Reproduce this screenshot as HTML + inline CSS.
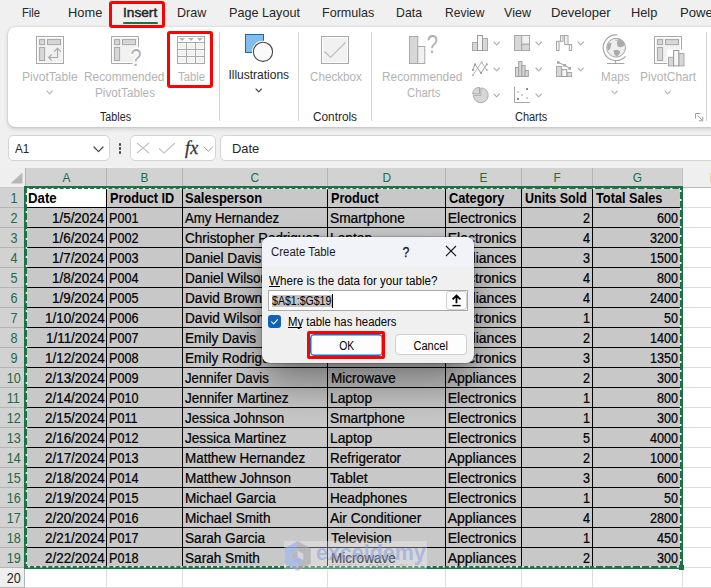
<!DOCTYPE html>
<html lang="en"><head><meta charset="utf-8"><title>Create Table</title>
<style>
*{box-sizing:border-box;margin:0;padding:0}
html,body{width:711px;height:588px;overflow:hidden;background:#f0f0f0}
#root{position:relative;width:711px;height:588px;overflow:hidden;background:#f0f0f0;font-family:"Liberation Sans",sans-serif}
</style></head><body><div id="root">
<!-- tabs -->
<span style="position:absolute;top:4.00px;font-size:13px;line-height:17px;color:#262626;white-space:nowrap;left:22.40px;transform-origin:0 50%;transform:scaleX(0.864);">File</span>
<span style="position:absolute;top:4.00px;font-size:13px;line-height:17px;color:#262626;white-space:nowrap;left:68.40px;transform-origin:0 50%;transform:scaleX(0.989);">Home</span>
<span style="position:absolute;top:4.00px;font-size:13px;line-height:17px;color:#262626;white-space:nowrap;left:177.10px;transform-origin:0 50%;transform:scaleX(0.963);">Draw</span>
<span style="position:absolute;top:4.00px;font-size:13px;line-height:17px;color:#262626;white-space:nowrap;left:229.20px;transform-origin:0 50%;transform:scaleX(0.973);">Page Layout</span>
<span style="position:absolute;top:4.00px;font-size:13px;line-height:17px;color:#262626;white-space:nowrap;left:322.30px;transform-origin:0 50%;transform:scaleX(0.967);">Formulas</span>
<span style="position:absolute;top:4.00px;font-size:13px;line-height:17px;color:#262626;white-space:nowrap;left:396.40px;transform-origin:0 50%;transform:scaleX(0.947);">Data</span>
<span style="position:absolute;top:4.00px;font-size:13px;line-height:17px;color:#262626;white-space:nowrap;left:444.50px;transform-origin:0 50%;transform:scaleX(0.927);">Review</span>
<span style="position:absolute;top:4.00px;font-size:13px;line-height:17px;color:#262626;white-space:nowrap;left:503.80px;transform-origin:0 50%;transform:scaleX(0.966);">View</span>
<span style="position:absolute;top:4.00px;font-size:13px;line-height:17px;color:#262626;white-space:nowrap;left:551.00px;transform-origin:0 50%;transform:scaleX(1.007);">Developer</span>
<span style="position:absolute;top:4.00px;font-size:13px;line-height:17px;color:#262626;white-space:nowrap;left:630.60px;transform-origin:0 50%;transform:scaleX(0.984);">Help</span>
<span style="position:absolute;top:4.00px;font-size:13px;line-height:17px;color:#262626;white-space:nowrap;left:680.20px;transform-origin:0 50%;transform:scaleX(1.009);">Power Pivot</span>
<span style="position:absolute;top:4.00px;font-size:13px;line-height:17px;color:#262626;white-space:nowrap;left:122.90px;transform-origin:0 50%;transform:scaleX(1.052);-webkit-text-stroke:0.45px #262626;">Insert</span>
<div style="position:absolute;left:123.2px;top:21.5px;width:35px;height:2px;background:#1e7145;border-radius:1px"></div>
<!-- ribbon -->
<div style="position:absolute;left:8px;top:27px;width:720px;height:99.7px;background:#fff;border-radius:7px;box-shadow:0 2px 4px rgba(0,0,0,.15),0 0 1.5px rgba(0,0,0,.25)"></div>
<div style="position:absolute;left:219.0px;top:32px;width:1px;height:88.5px;background:#d4d4d4"></div>
<div style="position:absolute;left:298.0px;top:32px;width:1px;height:88.5px;background:#d4d4d4"></div>
<div style="position:absolute;left:371.0px;top:32px;width:1px;height:88.5px;background:#d4d4d4"></div>
<div style="position:absolute;left:706.0px;top:32px;width:1px;height:88.5px;background:#d4d4d4"></div>
<span style="position:absolute;top:69.00px;font-size:12px;line-height:16px;color:#b3b3b3;white-space:nowrap;left:21.80px;transform-origin:0 50%;transform:scaleX(1.004);">PivotTable</span>
<svg style="position:absolute;left:45.60px;top:90.10px" width="7.4" height="4.8" viewBox="-1 -1 7.4 4.8"><path d="M0 0 L2.7 2.8 L5.4 0" fill="none" stroke="#b8b8b8" stroke-width="1.1" stroke-linecap="round" stroke-linejoin="round"/></svg>
<span style="position:absolute;top:69.00px;font-size:12px;line-height:16px;color:#b3b3b3;white-space:nowrap;left:84.30px;transform-origin:0 50%;transform:scaleX(0.987);">Recommended</span>
<span style="position:absolute;top:85.00px;font-size:12px;line-height:16px;color:#b3b3b3;white-space:nowrap;left:94.60px;transform-origin:0 50%;transform:scaleX(0.978);">PivotTables</span>
<span style="position:absolute;top:69.00px;font-size:12px;line-height:16px;color:#b3b3b3;white-space:nowrap;left:177.90px;transform-origin:0 50%;transform:scaleX(0.945);">Table</span>
<span style="position:absolute;top:67.00px;font-size:12px;line-height:16px;color:#262626;white-space:nowrap;left:228.40px;transform-origin:0 50%;">Illustrations</span>
<svg style="position:absolute;left:254.80px;top:87.80px" width="7.4" height="4.8" viewBox="-1 -1 7.4 4.8"><path d="M0 0 L2.7 2.8 L5.4 0" fill="none" stroke="#444" stroke-width="1.1" stroke-linecap="round" stroke-linejoin="round"/></svg>
<span style="position:absolute;top:69.00px;font-size:12px;line-height:16px;color:#b3b3b3;white-space:nowrap;left:309.60px;transform-origin:0 50%;transform:scaleX(0.971);">Checkbox</span>
<span style="position:absolute;top:69.00px;font-size:12px;line-height:16px;color:#b3b3b3;white-space:nowrap;left:382.40px;transform-origin:0 50%;transform:scaleX(0.987);">Recommended</span>
<span style="position:absolute;top:85.00px;font-size:12px;line-height:16px;color:#b3b3b3;white-space:nowrap;left:406.60px;transform-origin:0 50%;transform:scaleX(0.945);">Charts</span>
<span style="position:absolute;top:69.00px;font-size:12px;line-height:16px;color:#b3b3b3;white-space:nowrap;left:600.60px;transform-origin:0 50%;transform:scaleX(0.971);">Maps</span>
<svg style="position:absolute;left:610.90px;top:90.10px" width="7.4" height="4.8" viewBox="-1 -1 7.4 4.8"><path d="M0 0 L2.7 2.8 L5.4 0" fill="none" stroke="#b8b8b8" stroke-width="1.1" stroke-linecap="round" stroke-linejoin="round"/></svg>
<span style="position:absolute;top:69.00px;font-size:12px;line-height:16px;color:#b3b3b3;white-space:nowrap;left:640.10px;transform-origin:0 50%;">PivotChart</span>
<svg style="position:absolute;left:663.70px;top:90.10px" width="7.4" height="4.8" viewBox="-1 -1 7.4 4.8"><path d="M0 0 L2.7 2.8 L5.4 0" fill="none" stroke="#b8b8b8" stroke-width="1.1" stroke-linecap="round" stroke-linejoin="round"/></svg>
<span style="position:absolute;top:109.00px;font-size:12px;line-height:16px;color:#262626;white-space:nowrap;left:99.60px;transform-origin:0 50%;transform:scaleX(0.894);">Tables</span>
<span style="position:absolute;top:109.00px;font-size:12px;line-height:16px;color:#262626;white-space:nowrap;left:313.00px;transform-origin:0 50%;transform:scaleX(0.985);">Controls</span>
<span style="position:absolute;top:109.00px;font-size:12px;line-height:16px;color:#262626;white-space:nowrap;left:515.30px;transform-origin:0 50%;transform:scaleX(0.914);">Charts</span>
<svg style="position:absolute;left:36px;top:36px;overflow:visible" width="28" height="28" viewBox="0 0 28 28"><rect x="0.5" y="0.5" width="27" height="27" fill="#f1f1f1" stroke="#a8a8a8" stroke-width="1"/><rect x="1.5" y="1.5" width="25" height="25" fill="none" stroke="#fff" stroke-width="1"/><rect x="3.6" y="3.6" width="5" height="5" fill="#d7d7d7" stroke="#a8a8a8" stroke-width="1"/><rect x="11.5" y="3.6" width="13" height="5" fill="#d7d7d7" stroke="#a8a8a8" stroke-width="1"/><rect x="3.6" y="11.5" width="5" height="13" fill="#d7d7d7" stroke="#a8a8a8" stroke-width="1"/><path d="M21.5 12.3 V21.5 H12.6 M18.3 15.5 L21.5 12.3 L24.7 15.5 M15.8 18.3 L12.6 21.5 L15.8 24.7" fill="none" stroke="#a8a8a8" stroke-width="1.1"/></svg>
<svg style="position:absolute;left:111px;top:36px;overflow:visible" width="30" height="30" viewBox="0 0 30 30"><path d="M27.5 11.5 V0.5 H0.5 V27.5 H21.5" fill="#f1f1f1" stroke="none"/><rect x="0.5" y="0.5" width="27" height="27" fill="#f1f1f1" stroke="none"/><rect x="1.5" y="1.5" width="25" height="25" fill="none" stroke="#fff" stroke-width="1"/><path d="M27.5 11.5 V0.5 H0.5 V27.5 H21.5" fill="none" stroke="#a8a8a8" stroke-width="1"/><rect x="3.6" y="3.6" width="5" height="5" fill="#d7d7d7" stroke="#a8a8a8" stroke-width="1"/><rect x="11.5" y="3.6" width="13" height="5" fill="#d7d7d7" stroke="#a8a8a8" stroke-width="1"/><rect x="3.6" y="11.5" width="5" height="13" fill="#d7d7d7" stroke="#a8a8a8" stroke-width="1"/><text transform="translate(25 29.5) scale(0.8 1)" text-anchor="middle" font-family="Liberation Sans, sans-serif" font-size="24.5" fill="#b0b0b0" stroke="#fff" stroke-width="3.4" stroke-linejoin="round" paint-order="stroke">?</text></svg>
<svg style="position:absolute;left:177px;top:36px;overflow:visible" width="28" height="28" viewBox="0 0 28 28"><rect x="0.5" y="0.5" width="27" height="27" fill="#fff" stroke="#a8a8a8" stroke-width="1"/><rect x="1" y="6.5" width="26" height="20.5" fill="#f1f1f1"/><path d="M0.5 6.5 H27.5 M0.5 13.5 H27.5 M0.5 20.5 H27.5 M9.5 6.5 V27.5 M18.5 6.5 V27.5" stroke="#a8a8a8" stroke-width="1" fill="none"/><path d="M1.5 7.5 H8.5 V12.5 H1.5 Z M10.5 7.5 H17.5 V12.5 H10.5 Z M19.5 7.5 H26.5 V12.5 H19.5 Z M1.5 14.5 H8.5 V19.5 H1.5 Z M10.5 14.5 H17.5 V19.5 H10.5 Z M19.5 14.5 H26.5 V19.5 H19.5 Z M1.5 21.5 H8.5 V26.5 H1.5 Z M10.5 21.5 H17.5 V26.5 H10.5 Z M19.5 21.5 H26.5 V26.5 H19.5 Z" fill="none" stroke="#fff" stroke-width="0.6"/><path d="M2.2 2 H8.2 L5.2 5 Z" fill="#b2b2b2"/><path d="M11 2 H17 L14 5 Z" fill="#b2b2b2"/><path d="M19.8 2 H25.8 L22.8 5 Z" fill="#b2b2b2"/></svg>
<svg style="position:absolute;left:244px;top:33px;overflow:visible" width="32" height="32" viewBox="0 0 32 32"><rect x="1.5" y="1.5" width="18" height="18" fill="#83bdec" stroke="#0f6cbd" stroke-width="1"/><circle cx="19" cy="18.8" r="11" fill="#fff"/><circle cx="19" cy="18.8" r="9.6" fill="#fafafa" stroke="#474747" stroke-width="1.1"/></svg>
<svg style="position:absolute;left:321px;top:36px;overflow:visible" width="28" height="28" viewBox="0 0 28 28"><rect x="0.5" y="0.5" width="27" height="27" fill="#f1f1f1" stroke="#a8a8a8" stroke-width="1"/><rect x="1.5" y="1.5" width="25" height="25" fill="none" stroke="#fff" stroke-width="0.8"/><path d="M3.5 15.5 L9.5 21.3 L24.5 6.3" fill="none" stroke="#b4b4b4" stroke-width="1.1"/></svg>
<svg style="position:absolute;left:409px;top:36px;overflow:visible" width="30" height="28" viewBox="0 0 30 28"><rect x="0.5" y="0.5" width="8.3" height="27" fill="#d7d7d7" stroke="#a8a8a8" stroke-width="1"/><rect x="8.8" y="10.5" width="7" height="17" fill="#f1f1f1" stroke="#a8a8a8" stroke-width="1"/><text transform="translate(23.2 16.6) scale(0.8 1)" text-anchor="middle" font-family="Liberation Sans, sans-serif" font-size="25" fill="#b0b0b0">?</text></svg>
<svg style="position:absolute;left:472px;top:35px;overflow:visible" width="16" height="16" viewBox="0 0 16 16"><rect x="0.5" y="7.5" width="5" height="8" fill="#d7d7d7" stroke="#a8a8a8" stroke-width="1"/><rect x="10.5" y="3.5" width="5" height="12" fill="#d7d7d7" stroke="#a8a8a8" stroke-width="1"/><rect x="5.5" y="0.5" width="5" height="15" fill="#f6f6f6" stroke="#9a9a9a" stroke-width="1"/></svg>
<svg style="position:absolute;left:472px;top:61px;overflow:visible" width="16" height="16" viewBox="0 0 16 16"><path d="M0.8 9 L2.9 3.3 L9 12 L14.8 3.3" fill="none" stroke="#9c9c9c" stroke-width="1"/><path d="M0.8 14.2 L9.6 1.3 L14.8 9" fill="none" stroke="#b6b6b6" stroke-width="1"/><rect x="0.0" y="8.1" width="1.8" height="1.8" fill="#999"/><rect x="2.0" y="2.4" width="1.8" height="1.8" fill="#999"/><rect x="8.1" y="11.1" width="1.8" height="1.8" fill="#999"/><rect x="13.9" y="2.4" width="1.8" height="1.8" fill="#999"/><rect x="0.0" y="13.299999999999999" width="1.8" height="1.8" fill="#b6b6b6"/><rect x="8.7" y="0.4" width="1.8" height="1.8" fill="#b6b6b6"/><rect x="13.9" y="8.1" width="1.8" height="1.8" fill="#b6b6b6"/></svg>
<svg style="position:absolute;left:472px;top:87px;overflow:visible" width="16" height="16" viewBox="0 0 16 16"><path d="M8.8 8.3 V0.9 A7.4 7.4 0 1 1 1.4 8.3 Z" fill="#d7d7d7" stroke="#a8a8a8" stroke-width="1"/><path d="M7.5 7 H0.6 A6.9 6.9 0 0 1 7.5 0.4 Z" fill="#d7d7d7" stroke="#a8a8a8" stroke-width="1"/></svg>
<svg style="position:absolute;left:514px;top:35px;overflow:visible" width="16" height="16" viewBox="0 0 16 16"><rect x="0.5" y="0.5" width="7.2" height="15" fill="#d7d7d7" stroke="#a8a8a8" stroke-width="1"/><rect x="7.7" y="0.5" width="7.8" height="8.7" fill="#f1f1f1" stroke="#a8a8a8" stroke-width="1"/><rect x="7.7" y="9.2" width="7.8" height="6.3" fill="#d7d7d7" stroke="#a8a8a8" stroke-width="1"/></svg>
<svg style="position:absolute;left:515px;top:61px;overflow:visible" width="14" height="16" viewBox="0 0 14 16"><rect x="0.5" y="6.5" width="3.2" height="9" fill="#d7d7d7" stroke="#a0a0a0" stroke-width="1"/><rect x="3.7" y="0.6" width="3.2" height="14.9" fill="#d7d7d7" stroke="#a0a0a0" stroke-width="1"/><rect x="6.9" y="4.5" width="3.2" height="11" fill="#d7d7d7" stroke="#a0a0a0" stroke-width="1"/><rect x="10.1" y="9.5" width="3.2" height="6" fill="#d7d7d7" stroke="#a0a0a0" stroke-width="1"/></svg>
<svg style="position:absolute;left:514px;top:87px;overflow:visible" width="16" height="16" viewBox="0 0 16 16"><path d="M0.5 0 V15.5 H16" fill="none" stroke="#a8a8a8" stroke-width="1"/><rect x="12" y="1" width="2" height="2" fill="#8e8e8e"/><rect x="3" y="11" width="2" height="2" fill="#8e8e8e"/><rect x="3" y="4" width="2" height="2" fill="#cfcfcf"/><rect x="7" y="7" width="2" height="2" fill="#cfcfcf"/><rect x="12" y="10" width="2" height="2" fill="#cfcfcf"/></svg>
<svg style="position:absolute;left:556px;top:35px;overflow:visible" width="16" height="16" viewBox="0 0 16 16"><rect x="0.5" y="6.3" width="2.6" height="9.2" fill="#f1f1f1" stroke="#a8a8a8" stroke-width="1"/><rect x="4.5" y="0.5" width="2.6" height="5.8" fill="#f1f1f1" stroke="#a8a8a8" stroke-width="1"/><rect x="8.6" y="0.5" width="3.4" height="9" fill="#f1f1f1" stroke="#a8a8a8" stroke-width="1"/><rect x="13.3" y="9.5" width="2.4" height="6" fill="#f1f1f1" stroke="#a8a8a8" stroke-width="1"/><path d="M3.1 6.3 H4.5 M7.1 0.5 H8.6 M12 9.5 H13.3" stroke="#a8a8a8" stroke-width="1" fill="none"/></svg>
<svg style="position:absolute;left:556px;top:61px;overflow:visible" width="16" height="16" viewBox="0 0 16 16"><rect x="0.5" y="5.5" width="5.2" height="10" fill="#d7d7d7" stroke="#a8a8a8" stroke-width="1"/><rect x="10.8" y="11.5" width="4.8" height="4" fill="#d7d7d7" stroke="#a8a8a8" stroke-width="1"/><rect x="5.7" y="8.7" width="5.1" height="6.8" fill="#f6f6f6" stroke="#9a9a9a" stroke-width="1"/><path d="M2.3 1.4 L8.6 4.3 L13.6 7.4" stroke="#a0a0a0" stroke-width="1" fill="none"/><rect x="1" y="0.3" width="2.6" height="2.4" fill="#a0a0a0"/><rect x="7.4" y="3.2" width="2.6" height="2.4" fill="#a0a0a0"/><rect x="12.4" y="6.2" width="2.6" height="2.4" fill="#a0a0a0"/></svg>
<svg style="position:absolute;left:602px;top:34px;overflow:visible" width="26" height="31" viewBox="0 0 26 31"><circle cx="14.1" cy="13.7" r="9.4" fill="#efefef" stroke="#a4a4a4" stroke-width="1"/><path d="M16 5 C19 4.5 22.5 7 22.8 10.5 C21 13.5 17.5 14 15.5 12 C14.5 10 15 7 16 5 Z" fill="#ababab"/><path d="M5.5 10.5 C7 8.5 9 8.5 9.5 9.5 C9 12 8.5 14 7 16.5 C5.5 16 4.8 13 5.5 10.5 Z" fill="#ababab"/><path d="M11.5 16.5 C14 15.8 17 16 18 17.5 C18 20 16.5 22 14.5 22.5 C12.5 21 11.5 19 11.5 16.5 Z" fill="#ababab"/><path d="M13.5 5.5 C14.5 5.2 15.2 5.8 14.8 6.8 C14 7.3 13.2 6.8 13.5 5.5 Z" fill="#b8b8b8"/><path d="M15.5 1 A12.8 12.8 0 1 0 23.5 22.3" fill="none" stroke="#a4a4a4" stroke-width="1.1"/><path d="M13.6 26.3 V29.5 M5 29.5 H22.3" stroke="#a4a4a4" stroke-width="1.1" fill="none"/></svg>
<svg style="position:absolute;left:654px;top:36px;overflow:visible" width="31" height="31" viewBox="0 0 31 31"><rect x="0.5" y="0.5" width="27" height="27" fill="#f1f1f1" stroke="#a8a8a8" stroke-width="1"/><rect x="1.5" y="1.5" width="25" height="25" fill="none" stroke="#fff" stroke-width="1"/><rect x="3.6" y="3.6" width="5" height="5" fill="#d7d7d7" stroke="#a8a8a8" stroke-width="1"/><rect x="11.5" y="3.6" width="13" height="5" fill="#d7d7d7" stroke="#a8a8a8" stroke-width="1"/><rect x="3.6" y="11.5" width="5" height="13" fill="#d7d7d7" stroke="#a8a8a8" stroke-width="1"/><rect x="13.3" y="13.5" width="18" height="17" fill="#fff"/><rect x="14.5" y="21.3" width="5.1" height="8.6" fill="#d7d7d7" stroke="#a8a8a8" stroke-width="1"/><rect x="24.8" y="17.6" width="5.2" height="12.3" fill="#d7d7d7" stroke="#a8a8a8" stroke-width="1"/><rect x="19.6" y="14.5" width="5.2" height="15.4" fill="#f6f6f6" stroke="#9a9a9a" stroke-width="1"/></svg>
<svg style="position:absolute;left:695px;top:113px;overflow:visible" width="9" height="9" viewBox="0 0 9 9"><path d="M0.5 5.5 V0.5 H5.5 M2.6 2.6 L7.6 7.6 M7.8 3.8 V7.8 H3.8" fill="none" stroke="#a0a0a0" stroke-width="1"/></svg>
<svg style="position:absolute;left:492.80px;top:41.10px" width="7.4" height="4.8" viewBox="-1 -1 7.4 4.8"><path d="M0 0 L2.7 2.8 L5.4 0" fill="none" stroke="#b0b0b0" stroke-width="1.1" stroke-linecap="round" stroke-linejoin="round"/></svg>
<svg style="position:absolute;left:492.80px;top:67.30px" width="7.4" height="4.8" viewBox="-1 -1 7.4 4.8"><path d="M0 0 L2.7 2.8 L5.4 0" fill="none" stroke="#b0b0b0" stroke-width="1.1" stroke-linecap="round" stroke-linejoin="round"/></svg>
<svg style="position:absolute;left:492.80px;top:93.20px" width="7.4" height="4.8" viewBox="-1 -1 7.4 4.8"><path d="M0 0 L2.7 2.8 L5.4 0" fill="none" stroke="#b0b0b0" stroke-width="1.1" stroke-linecap="round" stroke-linejoin="round"/></svg>
<svg style="position:absolute;left:534.80px;top:41.10px" width="7.4" height="4.8" viewBox="-1 -1 7.4 4.8"><path d="M0 0 L2.7 2.8 L5.4 0" fill="none" stroke="#b0b0b0" stroke-width="1.1" stroke-linecap="round" stroke-linejoin="round"/></svg>
<svg style="position:absolute;left:534.80px;top:67.30px" width="7.4" height="4.8" viewBox="-1 -1 7.4 4.8"><path d="M0 0 L2.7 2.8 L5.4 0" fill="none" stroke="#b0b0b0" stroke-width="1.1" stroke-linecap="round" stroke-linejoin="round"/></svg>
<svg style="position:absolute;left:534.80px;top:93.20px" width="7.4" height="4.8" viewBox="-1 -1 7.4 4.8"><path d="M0 0 L2.7 2.8 L5.4 0" fill="none" stroke="#b0b0b0" stroke-width="1.1" stroke-linecap="round" stroke-linejoin="round"/></svg>
<svg style="position:absolute;left:576.60px;top:41.10px" width="7.4" height="4.8" viewBox="-1 -1 7.4 4.8"><path d="M0 0 L2.7 2.8 L5.4 0" fill="none" stroke="#b0b0b0" stroke-width="1.1" stroke-linecap="round" stroke-linejoin="round"/></svg>
<svg style="position:absolute;left:576.60px;top:67.30px" width="7.4" height="4.8" viewBox="-1 -1 7.4 4.8"><path d="M0 0 L2.7 2.8 L5.4 0" fill="none" stroke="#b0b0b0" stroke-width="1.1" stroke-linecap="round" stroke-linejoin="round"/></svg>
<div style="position:absolute;left:109px;top:1px;width:56px;height:27px;border:3px solid #ff0000;border-radius:3px"></div>
<div style="position:absolute;left:167px;top:31px;width:46px;height:57px;border:3px solid #ff0000;border-radius:3px"></div>
<!-- formula bar -->
<div style="position:absolute;left:8px;top:135px;width:102px;height:26px;background:#fff;border:1px solid #d4d4d4;border-radius:5px"></div>
<span style="position:absolute;top:139.50px;font-size:13.5px;line-height:18px;color:#262626;white-space:nowrap;left:15.00px;transform-origin:0 50%;transform:scaleX(0.866);">A1</span>
<svg style="position:absolute;left:93.10px;top:146.30px" width="11" height="6.6" viewBox="-1 -1 11 6.6"><path d="M0 0 L4.5 4.6 L9 0" fill="none" stroke="#444" stroke-width="1.2" stroke-linecap="round" stroke-linejoin="round"/></svg>
<div style="position:absolute;left:119px;top:143.3px;width:2.4px;height:2.4px;background:#444;border-radius:50%"></div>
<div style="position:absolute;left:119px;top:147.3px;width:2.4px;height:2.4px;background:#444;border-radius:50%"></div>
<div style="position:absolute;left:119px;top:151.3px;width:2.4px;height:2.4px;background:#444;border-radius:50%"></div>
<div style="position:absolute;left:130px;top:135px;width:86px;height:26px;background:#fff;border:1px solid #d4d4d4;border-radius:5px"></div>
<svg style="position:absolute;left:136px;top:142px" width="14" height="12" viewBox="0 0 14 12"><path d="M1 1 L13 11 M13 1 L1 11" stroke="#c4c4c4" stroke-width="1.2" fill="none"/></svg>
<svg style="position:absolute;left:158px;top:142px" width="18" height="12" viewBox="0 0 18 12"><path d="M1 6.5 L6 11 L17 1" stroke="#c4c4c4" stroke-width="1.2" fill="none"/></svg>
<span style="position:absolute;left:185px;top:137.5px;font-family:'Liberation Serif',serif;font-style:italic;font-size:18px;line-height:20px;color:#333;letter-spacing:0.2px;-webkit-text-stroke:0.3px #333">fx</span>
<svg style="position:absolute;left:203.40px;top:145.50px" width="10.6" height="6.2" viewBox="-1 -1 10.6 6.2"><path d="M0 0 L4.3 4.2 L8.6 0" fill="none" stroke="#9a9a9a" stroke-width="1" stroke-linecap="round" stroke-linejoin="round"/></svg>
<div style="position:absolute;left:220px;top:135px;width:520px;height:26px;background:#fff;border:1px solid #d4d4d4;border-radius:5px"></div>
<span style="position:absolute;top:139.50px;font-size:13.5px;line-height:18px;color:#262626;white-space:nowrap;left:231.60px;transform-origin:0 50%;transform:scaleX(0.957);">Date</span>
<!-- grid -->
<div style="position:absolute;left:0px;top:168px;width:711px;height:420px;background:#fff"></div>
<div style="position:absolute;left:0px;top:168px;width:25px;height:19px;background:#efefef"></div>
<svg style="position:absolute;left:10px;top:172px" width="13" height="12" viewBox="0 0 13 12"><path d="M12.5 0.5 L12.5 11.5 L0.5 11.5 Z" fill="#b7b7b7"/></svg>
<div style="position:absolute;left:25px;top:168px;width:657px;height:19px;background:#d2d2d2"></div>
<div style="position:absolute;left:106px;top:168px;width:1px;height:19px;background:#b4b4b4"></div>
<span style="position:absolute;top:168.50px;font-size:13.5px;line-height:18px;color:#1e6b45;white-space:nowrap;left:61.50px;transform-origin:50% 50%;transform:scaleX(0.880);">A</span>
<div style="position:absolute;left:182px;top:168px;width:1px;height:19px;background:#b4b4b4"></div>
<span style="position:absolute;top:168.50px;font-size:13.5px;line-height:18px;color:#1e6b45;white-space:nowrap;left:140.00px;transform-origin:50% 50%;transform:scaleX(0.880);">B</span>
<div style="position:absolute;left:327px;top:168px;width:1px;height:19px;background:#b4b4b4"></div>
<span style="position:absolute;top:168.50px;font-size:13.5px;line-height:18px;color:#1e6b45;white-space:nowrap;left:250.13px;transform-origin:50% 50%;transform:scaleX(0.880);">C</span>
<div style="position:absolute;left:445px;top:168px;width:1px;height:19px;background:#b4b4b4"></div>
<span style="position:absolute;top:168.50px;font-size:13.5px;line-height:18px;color:#1e6b45;white-space:nowrap;left:381.63px;transform-origin:50% 50%;transform:scaleX(0.880);">D</span>
<div style="position:absolute;left:521px;top:168px;width:1px;height:19px;background:#b4b4b4"></div>
<span style="position:absolute;top:168.50px;font-size:13.5px;line-height:18px;color:#1e6b45;white-space:nowrap;left:479.00px;transform-origin:50% 50%;transform:scaleX(0.880);">E</span>
<div style="position:absolute;left:592px;top:168px;width:1px;height:19px;background:#b4b4b4"></div>
<span style="position:absolute;top:168.50px;font-size:13.5px;line-height:18px;color:#1e6b45;white-space:nowrap;left:552.88px;transform-origin:50% 50%;transform:scaleX(0.880);">F</span>
<span style="position:absolute;top:168.50px;font-size:13.5px;line-height:18px;color:#1e6b45;white-space:nowrap;left:632.25px;transform-origin:50% 50%;transform:scaleX(0.880);">G</span>
<div style="position:absolute;left:25px;top:168px;width:1px;height:19px;background:#b4b4b4"></div>
<div style="position:absolute;left:682px;top:168px;width:29px;height:19px;background:#efefef"></div>
<div style="position:absolute;left:681.5px;top:168px;width:1px;height:19px;background:#c4c4c4"></div>
<div style="position:absolute;left:682px;top:186.5px;width:29px;height:1px;background:#b8b8b8"></div>
<span style="position:absolute;top:168.50px;font-size:13.5px;line-height:18px;color:#262626;white-space:nowrap;left:709.70px;transform-origin:0 50%;transform:scaleX(0.880);">H</span>
<div style="position:absolute;left:0px;top:186.5px;width:25px;height:1px;background:#c8c8c8"></div>
<div style="position:absolute;left:0px;top:188px;width:25px;height:20px;background:#d2d2d2"></div>
<div style="position:absolute;left:0px;top:207px;width:25px;height:1px;background:#b4b4b4"></div>
<span style="position:absolute;top:189.00px;font-size:14px;line-height:18px;color:#1e6b45;white-space:nowrap;left:9.51px;transform-origin:50% 50%;transform:scaleX(0.900);">1</span>
<div style="position:absolute;left:0px;top:208px;width:25px;height:20px;background:#d2d2d2"></div>
<div style="position:absolute;left:0px;top:227px;width:25px;height:1px;background:#b4b4b4"></div>
<span style="position:absolute;top:209.00px;font-size:14px;line-height:18px;color:#1e6b45;white-space:nowrap;left:9.51px;transform-origin:50% 50%;transform:scaleX(0.900);">2</span>
<div style="position:absolute;left:0px;top:228px;width:25px;height:20px;background:#d2d2d2"></div>
<div style="position:absolute;left:0px;top:247px;width:25px;height:1px;background:#b4b4b4"></div>
<span style="position:absolute;top:229.00px;font-size:14px;line-height:18px;color:#1e6b45;white-space:nowrap;left:9.51px;transform-origin:50% 50%;transform:scaleX(0.900);">3</span>
<div style="position:absolute;left:0px;top:248px;width:25px;height:20px;background:#d2d2d2"></div>
<div style="position:absolute;left:0px;top:267px;width:25px;height:1px;background:#b4b4b4"></div>
<span style="position:absolute;top:249.00px;font-size:14px;line-height:18px;color:#1e6b45;white-space:nowrap;left:9.51px;transform-origin:50% 50%;transform:scaleX(0.900);">4</span>
<div style="position:absolute;left:0px;top:268px;width:25px;height:20px;background:#d2d2d2"></div>
<div style="position:absolute;left:0px;top:287px;width:25px;height:1px;background:#b4b4b4"></div>
<span style="position:absolute;top:269.00px;font-size:14px;line-height:18px;color:#1e6b45;white-space:nowrap;left:9.51px;transform-origin:50% 50%;transform:scaleX(0.900);">5</span>
<div style="position:absolute;left:0px;top:288px;width:25px;height:20px;background:#d2d2d2"></div>
<div style="position:absolute;left:0px;top:307px;width:25px;height:1px;background:#b4b4b4"></div>
<span style="position:absolute;top:289.00px;font-size:14px;line-height:18px;color:#1e6b45;white-space:nowrap;left:9.51px;transform-origin:50% 50%;transform:scaleX(0.900);">6</span>
<div style="position:absolute;left:0px;top:308px;width:25px;height:20px;background:#d2d2d2"></div>
<div style="position:absolute;left:0px;top:327px;width:25px;height:1px;background:#b4b4b4"></div>
<span style="position:absolute;top:309.00px;font-size:14px;line-height:18px;color:#1e6b45;white-space:nowrap;left:9.51px;transform-origin:50% 50%;transform:scaleX(0.900);">7</span>
<div style="position:absolute;left:0px;top:328px;width:25px;height:20px;background:#d2d2d2"></div>
<div style="position:absolute;left:0px;top:347px;width:25px;height:1px;background:#b4b4b4"></div>
<span style="position:absolute;top:329.00px;font-size:14px;line-height:18px;color:#1e6b45;white-space:nowrap;left:9.51px;transform-origin:50% 50%;transform:scaleX(0.900);">8</span>
<div style="position:absolute;left:0px;top:348px;width:25px;height:20px;background:#d2d2d2"></div>
<div style="position:absolute;left:0px;top:367px;width:25px;height:1px;background:#b4b4b4"></div>
<span style="position:absolute;top:349.00px;font-size:14px;line-height:18px;color:#1e6b45;white-space:nowrap;left:9.51px;transform-origin:50% 50%;transform:scaleX(0.900);">9</span>
<div style="position:absolute;left:0px;top:368px;width:25px;height:20px;background:#d2d2d2"></div>
<div style="position:absolute;left:0px;top:387px;width:25px;height:1px;background:#b4b4b4"></div>
<span style="position:absolute;top:369.00px;font-size:14px;line-height:18px;color:#1e6b45;white-space:nowrap;left:5.61px;transform-origin:50% 50%;transform:scaleX(0.900);">10</span>
<div style="position:absolute;left:0px;top:388px;width:25px;height:20px;background:#d2d2d2"></div>
<div style="position:absolute;left:0px;top:407px;width:25px;height:1px;background:#b4b4b4"></div>
<span style="position:absolute;top:389.00px;font-size:14px;line-height:18px;color:#1e6b45;white-space:nowrap;left:6.13px;transform-origin:50% 50%;transform:scaleX(0.900);">11</span>
<div style="position:absolute;left:0px;top:408px;width:25px;height:20px;background:#d2d2d2"></div>
<div style="position:absolute;left:0px;top:427px;width:25px;height:1px;background:#b4b4b4"></div>
<span style="position:absolute;top:409.00px;font-size:14px;line-height:18px;color:#1e6b45;white-space:nowrap;left:5.61px;transform-origin:50% 50%;transform:scaleX(0.900);">12</span>
<div style="position:absolute;left:0px;top:428px;width:25px;height:20px;background:#d2d2d2"></div>
<div style="position:absolute;left:0px;top:447px;width:25px;height:1px;background:#b4b4b4"></div>
<span style="position:absolute;top:429.00px;font-size:14px;line-height:18px;color:#1e6b45;white-space:nowrap;left:5.61px;transform-origin:50% 50%;transform:scaleX(0.900);">13</span>
<div style="position:absolute;left:0px;top:448px;width:25px;height:20px;background:#d2d2d2"></div>
<div style="position:absolute;left:0px;top:467px;width:25px;height:1px;background:#b4b4b4"></div>
<span style="position:absolute;top:449.00px;font-size:14px;line-height:18px;color:#1e6b45;white-space:nowrap;left:5.61px;transform-origin:50% 50%;transform:scaleX(0.900);">14</span>
<div style="position:absolute;left:0px;top:468px;width:25px;height:20px;background:#d2d2d2"></div>
<div style="position:absolute;left:0px;top:487px;width:25px;height:1px;background:#b4b4b4"></div>
<span style="position:absolute;top:469.00px;font-size:14px;line-height:18px;color:#1e6b45;white-space:nowrap;left:5.61px;transform-origin:50% 50%;transform:scaleX(0.900);">15</span>
<div style="position:absolute;left:0px;top:488px;width:25px;height:20px;background:#d2d2d2"></div>
<div style="position:absolute;left:0px;top:507px;width:25px;height:1px;background:#b4b4b4"></div>
<span style="position:absolute;top:489.00px;font-size:14px;line-height:18px;color:#1e6b45;white-space:nowrap;left:5.61px;transform-origin:50% 50%;transform:scaleX(0.900);">16</span>
<div style="position:absolute;left:0px;top:508px;width:25px;height:20px;background:#d2d2d2"></div>
<div style="position:absolute;left:0px;top:527px;width:25px;height:1px;background:#b4b4b4"></div>
<span style="position:absolute;top:509.00px;font-size:14px;line-height:18px;color:#1e6b45;white-space:nowrap;left:5.61px;transform-origin:50% 50%;transform:scaleX(0.900);">17</span>
<div style="position:absolute;left:0px;top:528px;width:25px;height:20px;background:#d2d2d2"></div>
<div style="position:absolute;left:0px;top:547px;width:25px;height:1px;background:#b4b4b4"></div>
<span style="position:absolute;top:529.00px;font-size:14px;line-height:18px;color:#1e6b45;white-space:nowrap;left:5.61px;transform-origin:50% 50%;transform:scaleX(0.900);">18</span>
<div style="position:absolute;left:0px;top:548px;width:25px;height:20px;background:#d2d2d2"></div>
<div style="position:absolute;left:0px;top:567px;width:25px;height:1px;background:#b4b4b4"></div>
<span style="position:absolute;top:549.00px;font-size:14px;line-height:18px;color:#1e6b45;white-space:nowrap;left:5.61px;transform-origin:50% 50%;transform:scaleX(0.900);">19</span>
<div style="position:absolute;left:0px;top:568px;width:25px;height:20px;background:#efefef"></div>
<div style="position:absolute;left:0px;top:587px;width:25px;height:1px;background:#b4b4b4"></div>
<span style="position:absolute;top:569.00px;font-size:14px;line-height:18px;color:#262626;white-space:nowrap;left:5.61px;transform-origin:50% 50%;transform:scaleX(0.900);">20</span>
<div style="position:absolute;left:24px;top:187px;width:1px;height:401px;background:#b4b4b4"></div>
<div style="position:absolute;left:106px;top:568px;width:1px;height:20px;background:#dcdcdc"></div>
<div style="position:absolute;left:182px;top:568px;width:1px;height:20px;background:#dcdcdc"></div>
<div style="position:absolute;left:327px;top:568px;width:1px;height:20px;background:#dcdcdc"></div>
<div style="position:absolute;left:445px;top:568px;width:1px;height:20px;background:#dcdcdc"></div>
<div style="position:absolute;left:521px;top:568px;width:1px;height:20px;background:#dcdcdc"></div>
<div style="position:absolute;left:592px;top:568px;width:1px;height:20px;background:#dcdcdc"></div>
<div style="position:absolute;left:682px;top:568px;width:1px;height:20px;background:#dcdcdc"></div>
<div style="position:absolute;left:25px;top:587px;width:686px;height:1px;background:#dcdcdc"></div>
<div style="position:absolute;left:683px;top:207px;width:28px;height:1px;background:#dcdcdc"></div>
<div style="position:absolute;left:683px;top:227px;width:28px;height:1px;background:#dcdcdc"></div>
<div style="position:absolute;left:683px;top:247px;width:28px;height:1px;background:#dcdcdc"></div>
<div style="position:absolute;left:683px;top:267px;width:28px;height:1px;background:#dcdcdc"></div>
<div style="position:absolute;left:683px;top:287px;width:28px;height:1px;background:#dcdcdc"></div>
<div style="position:absolute;left:683px;top:307px;width:28px;height:1px;background:#dcdcdc"></div>
<div style="position:absolute;left:683px;top:327px;width:28px;height:1px;background:#dcdcdc"></div>
<div style="position:absolute;left:683px;top:347px;width:28px;height:1px;background:#dcdcdc"></div>
<div style="position:absolute;left:683px;top:367px;width:28px;height:1px;background:#dcdcdc"></div>
<div style="position:absolute;left:683px;top:387px;width:28px;height:1px;background:#dcdcdc"></div>
<div style="position:absolute;left:683px;top:407px;width:28px;height:1px;background:#dcdcdc"></div>
<div style="position:absolute;left:683px;top:427px;width:28px;height:1px;background:#dcdcdc"></div>
<div style="position:absolute;left:683px;top:447px;width:28px;height:1px;background:#dcdcdc"></div>
<div style="position:absolute;left:683px;top:467px;width:28px;height:1px;background:#dcdcdc"></div>
<div style="position:absolute;left:683px;top:487px;width:28px;height:1px;background:#dcdcdc"></div>
<div style="position:absolute;left:683px;top:507px;width:28px;height:1px;background:#dcdcdc"></div>
<div style="position:absolute;left:683px;top:527px;width:28px;height:1px;background:#dcdcdc"></div>
<div style="position:absolute;left:683px;top:547px;width:28px;height:1px;background:#dcdcdc"></div>
<div style="position:absolute;left:683px;top:567px;width:28px;height:1px;background:#dcdcdc"></div>
<div style="position:absolute;left:25px;top:187px;width:658px;height:381px;background:#c8c8c8"></div>
<div style="position:absolute;left:27px;top:189px;width:79px;height:18px;background:#fff"></div>
<div style="position:absolute;left:106px;top:187px;width:1px;height:381px;background:#000"></div>
<div style="position:absolute;left:182px;top:187px;width:1px;height:381px;background:#000"></div>
<div style="position:absolute;left:327px;top:187px;width:1px;height:381px;background:#000"></div>
<div style="position:absolute;left:445px;top:187px;width:1px;height:381px;background:#000"></div>
<div style="position:absolute;left:521px;top:187px;width:1px;height:381px;background:#000"></div>
<div style="position:absolute;left:592px;top:187px;width:1px;height:381px;background:#000"></div>
<div style="position:absolute;left:25px;top:207px;width:658px;height:1px;background:#000"></div>
<div style="position:absolute;left:25px;top:227px;width:658px;height:1px;background:#000"></div>
<div style="position:absolute;left:25px;top:247px;width:658px;height:1px;background:#000"></div>
<div style="position:absolute;left:25px;top:267px;width:658px;height:1px;background:#000"></div>
<div style="position:absolute;left:25px;top:287px;width:658px;height:1px;background:#000"></div>
<div style="position:absolute;left:25px;top:307px;width:658px;height:1px;background:#000"></div>
<div style="position:absolute;left:25px;top:327px;width:658px;height:1px;background:#000"></div>
<div style="position:absolute;left:25px;top:347px;width:658px;height:1px;background:#000"></div>
<div style="position:absolute;left:25px;top:367px;width:658px;height:1px;background:#000"></div>
<div style="position:absolute;left:25px;top:387px;width:658px;height:1px;background:#000"></div>
<div style="position:absolute;left:25px;top:407px;width:658px;height:1px;background:#000"></div>
<div style="position:absolute;left:25px;top:427px;width:658px;height:1px;background:#000"></div>
<div style="position:absolute;left:25px;top:447px;width:658px;height:1px;background:#000"></div>
<div style="position:absolute;left:25px;top:467px;width:658px;height:1px;background:#000"></div>
<div style="position:absolute;left:25px;top:487px;width:658px;height:1px;background:#000"></div>
<div style="position:absolute;left:25px;top:507px;width:658px;height:1px;background:#000"></div>
<div style="position:absolute;left:25px;top:527px;width:658px;height:1px;background:#000"></div>
<div style="position:absolute;left:25px;top:547px;width:658px;height:1px;background:#000"></div>
<span style="position:absolute;top:189.00px;font-size:14px;line-height:18px;color:#000;white-space:nowrap;font-weight:bold;left:28.20px;transform-origin:0 50%;transform:scaleX(0.946);">Date</span>
<span style="position:absolute;top:189.00px;font-size:14px;line-height:18px;color:#000;white-space:nowrap;font-weight:bold;left:109.90px;transform-origin:0 50%;transform:scaleX(0.906);">Product ID</span>
<span style="position:absolute;top:189.00px;font-size:14px;line-height:18px;color:#000;white-space:nowrap;font-weight:bold;left:185.30px;transform-origin:0 50%;transform:scaleX(0.926);">Salesperson</span>
<span style="position:absolute;top:189.00px;font-size:14px;line-height:18px;color:#000;white-space:nowrap;font-weight:bold;left:330.90px;transform-origin:0 50%;transform:scaleX(0.904);">Product</span>
<span style="position:absolute;top:189.00px;font-size:14px;line-height:18px;color:#000;white-space:nowrap;font-weight:bold;left:448.80px;transform-origin:0 50%;transform:scaleX(0.913);">Category</span>
<span style="position:absolute;top:189.00px;font-size:14px;line-height:18px;color:#000;white-space:nowrap;font-weight:bold;left:525.30px;transform-origin:0 50%;transform:scaleX(0.894);">Units Sold</span>
<span style="position:absolute;top:189.00px;font-size:14px;line-height:18px;color:#000;white-space:nowrap;font-weight:bold;left:595.90px;transform-origin:0 50%;transform:scaleX(0.911);">Total Sales</span>
<span style="position:absolute;top:209.00px;font-size:14px;line-height:18px;color:#000;white-space:nowrap;left:52.39px;transform-origin:0 50%;transform:scaleX(0.958);-webkit-text-stroke:0.22px #000;">1/5/2024</span>
<span style="position:absolute;top:209.00px;font-size:14px;line-height:18px;color:#000;white-space:nowrap;left:108.90px;transform-origin:0 50%;transform:scaleX(0.900);-webkit-text-stroke:0.22px #000;">P001</span>
<span style="position:absolute;top:209.00px;font-size:14px;line-height:18px;color:#000;white-space:nowrap;left:185.30px;transform-origin:0 50%;transform:scaleX(0.938);-webkit-text-stroke:0.22px #000;">Amy Hernandez</span>
<span style="position:absolute;top:209.00px;font-size:14px;line-height:18px;color:#000;white-space:nowrap;left:329.90px;transform-origin:0 50%;transform:scaleX(0.982);-webkit-text-stroke:0.22px #000;">Smartphone</span>
<span style="position:absolute;top:209.00px;font-size:14px;line-height:18px;color:#000;white-space:nowrap;left:447.70px;transform-origin:0 50%;-webkit-text-stroke:0.22px #000;">Electronics</span>
<span style="position:absolute;top:209.00px;font-size:14px;line-height:18px;color:#000;white-space:nowrap;left:583.09px;transform-origin:0 50%;transform:scaleX(0.900);-webkit-text-stroke:0.22px #000;">2</span>
<span style="position:absolute;top:209.00px;font-size:14px;line-height:18px;color:#000;white-space:nowrap;left:657.08px;transform-origin:0 50%;transform:scaleX(0.900);-webkit-text-stroke:0.22px #000;">600</span>
<span style="position:absolute;top:229.00px;font-size:14px;line-height:18px;color:#000;white-space:nowrap;left:52.39px;transform-origin:0 50%;transform:scaleX(0.958);-webkit-text-stroke:0.22px #000;">1/6/2024</span>
<span style="position:absolute;top:229.00px;font-size:14px;line-height:18px;color:#000;white-space:nowrap;left:108.90px;transform-origin:0 50%;transform:scaleX(0.900);-webkit-text-stroke:0.22px #000;">P002</span>
<span style="position:absolute;top:229.00px;font-size:14px;line-height:18px;color:#000;white-space:nowrap;left:185.30px;transform-origin:0 50%;transform:scaleX(0.960);-webkit-text-stroke:0.22px #000;">Christopher Rodriguez</span>
<span style="position:absolute;top:229.00px;font-size:14px;line-height:18px;color:#000;white-space:nowrap;left:330.10px;transform-origin:0 50%;transform:scaleX(0.985);-webkit-text-stroke:0.22px #000;">Laptop</span>
<span style="position:absolute;top:229.00px;font-size:14px;line-height:18px;color:#000;white-space:nowrap;left:447.70px;transform-origin:0 50%;-webkit-text-stroke:0.22px #000;">Electronics</span>
<span style="position:absolute;top:229.00px;font-size:14px;line-height:18px;color:#000;white-space:nowrap;left:583.09px;transform-origin:0 50%;transform:scaleX(0.900);-webkit-text-stroke:0.22px #000;">4</span>
<span style="position:absolute;top:229.00px;font-size:14px;line-height:18px;color:#000;white-space:nowrap;left:650.07px;transform-origin:0 50%;transform:scaleX(0.900);-webkit-text-stroke:0.22px #000;">3200</span>
<span style="position:absolute;top:249.00px;font-size:14px;line-height:18px;color:#000;white-space:nowrap;left:52.39px;transform-origin:0 50%;transform:scaleX(0.958);-webkit-text-stroke:0.22px #000;">1/7/2024</span>
<span style="position:absolute;top:249.00px;font-size:14px;line-height:18px;color:#000;white-space:nowrap;left:108.90px;transform-origin:0 50%;transform:scaleX(0.900);-webkit-text-stroke:0.22px #000;">P003</span>
<span style="position:absolute;top:249.00px;font-size:14px;line-height:18px;color:#000;white-space:nowrap;left:185.10px;transform-origin:0 50%;transform:scaleX(0.972);-webkit-text-stroke:0.22px #000;">Daniel Davis</span>
<span style="position:absolute;top:249.00px;font-size:14px;line-height:18px;color:#000;white-space:nowrap;left:447.70px;transform-origin:0 50%;-webkit-text-stroke:0.22px #000;">Appliances</span>
<span style="position:absolute;top:249.00px;font-size:14px;line-height:18px;color:#000;white-space:nowrap;left:583.09px;transform-origin:0 50%;transform:scaleX(0.900);-webkit-text-stroke:0.22px #000;">3</span>
<span style="position:absolute;top:249.00px;font-size:14px;line-height:18px;color:#000;white-space:nowrap;left:650.07px;transform-origin:0 50%;transform:scaleX(0.900);-webkit-text-stroke:0.22px #000;">1500</span>
<span style="position:absolute;top:269.00px;font-size:14px;line-height:18px;color:#000;white-space:nowrap;left:52.39px;transform-origin:0 50%;transform:scaleX(0.958);-webkit-text-stroke:0.22px #000;">1/8/2024</span>
<span style="position:absolute;top:269.00px;font-size:14px;line-height:18px;color:#000;white-space:nowrap;left:108.90px;transform-origin:0 50%;transform:scaleX(0.900);-webkit-text-stroke:0.22px #000;">P004</span>
<span style="position:absolute;top:269.00px;font-size:14px;line-height:18px;color:#000;white-space:nowrap;left:185.10px;transform-origin:0 50%;transform:scaleX(0.972);-webkit-text-stroke:0.22px #000;">Daniel Wilson</span>
<span style="position:absolute;top:269.00px;font-size:14px;line-height:18px;color:#000;white-space:nowrap;left:447.70px;transform-origin:0 50%;-webkit-text-stroke:0.22px #000;">Electronics</span>
<span style="position:absolute;top:269.00px;font-size:14px;line-height:18px;color:#000;white-space:nowrap;left:583.09px;transform-origin:0 50%;transform:scaleX(0.900);-webkit-text-stroke:0.22px #000;">4</span>
<span style="position:absolute;top:269.00px;font-size:14px;line-height:18px;color:#000;white-space:nowrap;left:657.08px;transform-origin:0 50%;transform:scaleX(0.900);-webkit-text-stroke:0.22px #000;">800</span>
<span style="position:absolute;top:289.00px;font-size:14px;line-height:18px;color:#000;white-space:nowrap;left:52.39px;transform-origin:0 50%;transform:scaleX(0.958);-webkit-text-stroke:0.22px #000;">1/9/2024</span>
<span style="position:absolute;top:289.00px;font-size:14px;line-height:18px;color:#000;white-space:nowrap;left:108.90px;transform-origin:0 50%;transform:scaleX(0.900);-webkit-text-stroke:0.22px #000;">P005</span>
<span style="position:absolute;top:289.00px;font-size:14px;line-height:18px;color:#000;white-space:nowrap;left:185.10px;transform-origin:0 50%;transform:scaleX(0.972);-webkit-text-stroke:0.22px #000;">David Brown</span>
<span style="position:absolute;top:289.00px;font-size:14px;line-height:18px;color:#000;white-space:nowrap;left:447.70px;transform-origin:0 50%;-webkit-text-stroke:0.22px #000;">Appliances</span>
<span style="position:absolute;top:289.00px;font-size:14px;line-height:18px;color:#000;white-space:nowrap;left:583.09px;transform-origin:0 50%;transform:scaleX(0.900);-webkit-text-stroke:0.22px #000;">4</span>
<span style="position:absolute;top:289.00px;font-size:14px;line-height:18px;color:#000;white-space:nowrap;left:650.07px;transform-origin:0 50%;transform:scaleX(0.900);-webkit-text-stroke:0.22px #000;">2400</span>
<span style="position:absolute;top:309.00px;font-size:14px;line-height:18px;color:#000;white-space:nowrap;left:44.93px;transform-origin:0 50%;transform:scaleX(0.958);-webkit-text-stroke:0.22px #000;">1/10/2024</span>
<span style="position:absolute;top:309.00px;font-size:14px;line-height:18px;color:#000;white-space:nowrap;left:108.90px;transform-origin:0 50%;transform:scaleX(0.900);-webkit-text-stroke:0.22px #000;">P006</span>
<span style="position:absolute;top:309.00px;font-size:14px;line-height:18px;color:#000;white-space:nowrap;left:185.10px;transform-origin:0 50%;transform:scaleX(0.972);-webkit-text-stroke:0.22px #000;">David Wilson</span>
<span style="position:absolute;top:309.00px;font-size:14px;line-height:18px;color:#000;white-space:nowrap;left:447.70px;transform-origin:0 50%;-webkit-text-stroke:0.22px #000;">Electronics</span>
<span style="position:absolute;top:309.00px;font-size:14px;line-height:18px;color:#000;white-space:nowrap;left:583.09px;transform-origin:0 50%;transform:scaleX(0.900);-webkit-text-stroke:0.22px #000;">1</span>
<span style="position:absolute;top:309.00px;font-size:14px;line-height:18px;color:#000;white-space:nowrap;left:664.09px;transform-origin:0 50%;transform:scaleX(0.900);-webkit-text-stroke:0.22px #000;">50</span>
<span style="position:absolute;top:329.00px;font-size:14px;line-height:18px;color:#000;white-space:nowrap;left:45.92px;transform-origin:0 50%;transform:scaleX(0.958);-webkit-text-stroke:0.22px #000;">1/11/2024</span>
<span style="position:absolute;top:329.00px;font-size:14px;line-height:18px;color:#000;white-space:nowrap;left:108.90px;transform-origin:0 50%;transform:scaleX(0.900);-webkit-text-stroke:0.22px #000;">P007</span>
<span style="position:absolute;top:329.00px;font-size:14px;line-height:18px;color:#000;white-space:nowrap;left:185.10px;transform-origin:0 50%;transform:scaleX(0.972);-webkit-text-stroke:0.22px #000;">Emily Davis</span>
<span style="position:absolute;top:329.00px;font-size:14px;line-height:18px;color:#000;white-space:nowrap;left:447.70px;transform-origin:0 50%;-webkit-text-stroke:0.22px #000;">Appliances</span>
<span style="position:absolute;top:329.00px;font-size:14px;line-height:18px;color:#000;white-space:nowrap;left:583.09px;transform-origin:0 50%;transform:scaleX(0.900);-webkit-text-stroke:0.22px #000;">2</span>
<span style="position:absolute;top:329.00px;font-size:14px;line-height:18px;color:#000;white-space:nowrap;left:650.07px;transform-origin:0 50%;transform:scaleX(0.900);-webkit-text-stroke:0.22px #000;">1400</span>
<span style="position:absolute;top:349.00px;font-size:14px;line-height:18px;color:#000;white-space:nowrap;left:44.93px;transform-origin:0 50%;transform:scaleX(0.958);-webkit-text-stroke:0.22px #000;">1/12/2024</span>
<span style="position:absolute;top:349.00px;font-size:14px;line-height:18px;color:#000;white-space:nowrap;left:108.90px;transform-origin:0 50%;transform:scaleX(0.900);-webkit-text-stroke:0.22px #000;">P008</span>
<span style="position:absolute;top:349.00px;font-size:14px;line-height:18px;color:#000;white-space:nowrap;left:185.10px;transform-origin:0 50%;transform:scaleX(0.972);-webkit-text-stroke:0.22px #000;">Emily Rodriguez</span>
<span style="position:absolute;top:349.00px;font-size:14px;line-height:18px;color:#000;white-space:nowrap;left:447.70px;transform-origin:0 50%;-webkit-text-stroke:0.22px #000;">Electronics</span>
<span style="position:absolute;top:349.00px;font-size:14px;line-height:18px;color:#000;white-space:nowrap;left:583.09px;transform-origin:0 50%;transform:scaleX(0.900);-webkit-text-stroke:0.22px #000;">3</span>
<span style="position:absolute;top:349.00px;font-size:14px;line-height:18px;color:#000;white-space:nowrap;left:650.07px;transform-origin:0 50%;transform:scaleX(0.900);-webkit-text-stroke:0.22px #000;">1350</span>
<span style="position:absolute;top:369.00px;font-size:14px;line-height:18px;color:#000;white-space:nowrap;left:44.93px;transform-origin:0 50%;transform:scaleX(0.958);-webkit-text-stroke:0.22px #000;">2/13/2024</span>
<span style="position:absolute;top:369.00px;font-size:14px;line-height:18px;color:#000;white-space:nowrap;left:108.90px;transform-origin:0 50%;transform:scaleX(0.900);-webkit-text-stroke:0.22px #000;">P009</span>
<span style="position:absolute;top:369.00px;font-size:14px;line-height:18px;color:#000;white-space:nowrap;left:185.30px;transform-origin:0 50%;transform:scaleX(0.945);-webkit-text-stroke:0.22px #000;">Jennifer Davis</span>
<span style="position:absolute;top:369.00px;font-size:14px;line-height:18px;color:#000;white-space:nowrap;left:330.50px;transform-origin:0 50%;transform:scaleX(0.969);-webkit-text-stroke:0.22px #000;">Microwave</span>
<span style="position:absolute;top:369.00px;font-size:14px;line-height:18px;color:#000;white-space:nowrap;left:447.70px;transform-origin:0 50%;-webkit-text-stroke:0.22px #000;">Appliances</span>
<span style="position:absolute;top:369.00px;font-size:14px;line-height:18px;color:#000;white-space:nowrap;left:583.09px;transform-origin:0 50%;transform:scaleX(0.900);-webkit-text-stroke:0.22px #000;">2</span>
<span style="position:absolute;top:369.00px;font-size:14px;line-height:18px;color:#000;white-space:nowrap;left:657.08px;transform-origin:0 50%;transform:scaleX(0.900);-webkit-text-stroke:0.22px #000;">300</span>
<span style="position:absolute;top:389.00px;font-size:14px;line-height:18px;color:#000;white-space:nowrap;left:44.93px;transform-origin:0 50%;transform:scaleX(0.958);-webkit-text-stroke:0.22px #000;">2/14/2024</span>
<span style="position:absolute;top:389.00px;font-size:14px;line-height:18px;color:#000;white-space:nowrap;left:108.90px;transform-origin:0 50%;transform:scaleX(0.900);-webkit-text-stroke:0.22px #000;">P010</span>
<span style="position:absolute;top:389.00px;font-size:14px;line-height:18px;color:#000;white-space:nowrap;left:185.30px;transform-origin:0 50%;transform:scaleX(0.965);-webkit-text-stroke:0.22px #000;">Jennifer Martinez</span>
<span style="position:absolute;top:389.00px;font-size:14px;line-height:18px;color:#000;white-space:nowrap;left:330.10px;transform-origin:0 50%;transform:scaleX(0.985);-webkit-text-stroke:0.22px #000;">Laptop</span>
<span style="position:absolute;top:389.00px;font-size:14px;line-height:18px;color:#000;white-space:nowrap;left:447.70px;transform-origin:0 50%;-webkit-text-stroke:0.22px #000;">Electronics</span>
<span style="position:absolute;top:389.00px;font-size:14px;line-height:18px;color:#000;white-space:nowrap;left:583.09px;transform-origin:0 50%;transform:scaleX(0.900);-webkit-text-stroke:0.22px #000;">1</span>
<span style="position:absolute;top:389.00px;font-size:14px;line-height:18px;color:#000;white-space:nowrap;left:657.08px;transform-origin:0 50%;transform:scaleX(0.900);-webkit-text-stroke:0.22px #000;">800</span>
<span style="position:absolute;top:409.00px;font-size:14px;line-height:18px;color:#000;white-space:nowrap;left:44.93px;transform-origin:0 50%;transform:scaleX(0.958);-webkit-text-stroke:0.22px #000;">2/15/2024</span>
<span style="position:absolute;top:409.00px;font-size:14px;line-height:18px;color:#000;white-space:nowrap;left:108.90px;transform-origin:0 50%;transform:scaleX(0.900);-webkit-text-stroke:0.22px #000;">P011</span>
<span style="position:absolute;top:409.00px;font-size:14px;line-height:18px;color:#000;white-space:nowrap;left:185.40px;transform-origin:0 50%;transform:scaleX(0.959);-webkit-text-stroke:0.22px #000;">Jessica Johnson</span>
<span style="position:absolute;top:409.00px;font-size:14px;line-height:18px;color:#000;white-space:nowrap;left:329.90px;transform-origin:0 50%;transform:scaleX(0.982);-webkit-text-stroke:0.22px #000;">Smartphone</span>
<span style="position:absolute;top:409.00px;font-size:14px;line-height:18px;color:#000;white-space:nowrap;left:447.70px;transform-origin:0 50%;-webkit-text-stroke:0.22px #000;">Electronics</span>
<span style="position:absolute;top:409.00px;font-size:14px;line-height:18px;color:#000;white-space:nowrap;left:583.09px;transform-origin:0 50%;transform:scaleX(0.900);-webkit-text-stroke:0.22px #000;">1</span>
<span style="position:absolute;top:409.00px;font-size:14px;line-height:18px;color:#000;white-space:nowrap;left:657.08px;transform-origin:0 50%;transform:scaleX(0.900);-webkit-text-stroke:0.22px #000;">300</span>
<span style="position:absolute;top:429.00px;font-size:14px;line-height:18px;color:#000;white-space:nowrap;left:44.93px;transform-origin:0 50%;transform:scaleX(0.958);-webkit-text-stroke:0.22px #000;">2/16/2024</span>
<span style="position:absolute;top:429.00px;font-size:14px;line-height:18px;color:#000;white-space:nowrap;left:108.90px;transform-origin:0 50%;transform:scaleX(0.900);-webkit-text-stroke:0.22px #000;">P012</span>
<span style="position:absolute;top:429.00px;font-size:14px;line-height:18px;color:#000;white-space:nowrap;left:185.10px;transform-origin:0 50%;transform:scaleX(0.972);-webkit-text-stroke:0.22px #000;">Jessica Martinez</span>
<span style="position:absolute;top:429.00px;font-size:14px;line-height:18px;color:#000;white-space:nowrap;left:330.10px;transform-origin:0 50%;transform:scaleX(0.985);-webkit-text-stroke:0.22px #000;">Laptop</span>
<span style="position:absolute;top:429.00px;font-size:14px;line-height:18px;color:#000;white-space:nowrap;left:447.70px;transform-origin:0 50%;-webkit-text-stroke:0.22px #000;">Electronics</span>
<span style="position:absolute;top:429.00px;font-size:14px;line-height:18px;color:#000;white-space:nowrap;left:583.09px;transform-origin:0 50%;transform:scaleX(0.900);-webkit-text-stroke:0.22px #000;">5</span>
<span style="position:absolute;top:429.00px;font-size:14px;line-height:18px;color:#000;white-space:nowrap;left:650.07px;transform-origin:0 50%;transform:scaleX(0.900);-webkit-text-stroke:0.22px #000;">4000</span>
<span style="position:absolute;top:449.00px;font-size:14px;line-height:18px;color:#000;white-space:nowrap;left:44.93px;transform-origin:0 50%;transform:scaleX(0.958);-webkit-text-stroke:0.22px #000;">2/17/2024</span>
<span style="position:absolute;top:449.00px;font-size:14px;line-height:18px;color:#000;white-space:nowrap;left:108.90px;transform-origin:0 50%;transform:scaleX(0.900);-webkit-text-stroke:0.22px #000;">P013</span>
<span style="position:absolute;top:449.00px;font-size:14px;line-height:18px;color:#000;white-space:nowrap;left:185.40px;transform-origin:0 50%;transform:scaleX(0.959);-webkit-text-stroke:0.22px #000;">Matthew Hernandez</span>
<span style="position:absolute;top:449.00px;font-size:14px;line-height:18px;color:#000;white-space:nowrap;left:330.10px;transform-origin:0 50%;transform:scaleX(0.962);-webkit-text-stroke:0.22px #000;">Refrigerator</span>
<span style="position:absolute;top:449.00px;font-size:14px;line-height:18px;color:#000;white-space:nowrap;left:447.70px;transform-origin:0 50%;-webkit-text-stroke:0.22px #000;">Appliances</span>
<span style="position:absolute;top:449.00px;font-size:14px;line-height:18px;color:#000;white-space:nowrap;left:583.09px;transform-origin:0 50%;transform:scaleX(0.900);-webkit-text-stroke:0.22px #000;">2</span>
<span style="position:absolute;top:449.00px;font-size:14px;line-height:18px;color:#000;white-space:nowrap;left:650.07px;transform-origin:0 50%;transform:scaleX(0.900);-webkit-text-stroke:0.22px #000;">1000</span>
<span style="position:absolute;top:469.00px;font-size:14px;line-height:18px;color:#000;white-space:nowrap;left:44.93px;transform-origin:0 50%;transform:scaleX(0.958);-webkit-text-stroke:0.22px #000;">2/18/2024</span>
<span style="position:absolute;top:469.00px;font-size:14px;line-height:18px;color:#000;white-space:nowrap;left:108.90px;transform-origin:0 50%;transform:scaleX(0.900);-webkit-text-stroke:0.22px #000;">P014</span>
<span style="position:absolute;top:469.00px;font-size:14px;line-height:18px;color:#000;white-space:nowrap;left:185.40px;transform-origin:0 50%;transform:scaleX(0.965);-webkit-text-stroke:0.22px #000;">Matthew Johnson</span>
<span style="position:absolute;top:469.00px;font-size:14px;line-height:18px;color:#000;white-space:nowrap;left:330.10px;transform-origin:0 50%;transform:scaleX(1.009);-webkit-text-stroke:0.22px #000;">Tablet</span>
<span style="position:absolute;top:469.00px;font-size:14px;line-height:18px;color:#000;white-space:nowrap;left:447.70px;transform-origin:0 50%;-webkit-text-stroke:0.22px #000;">Electronics</span>
<span style="position:absolute;top:469.00px;font-size:14px;line-height:18px;color:#000;white-space:nowrap;left:583.09px;transform-origin:0 50%;transform:scaleX(0.900);-webkit-text-stroke:0.22px #000;">3</span>
<span style="position:absolute;top:469.00px;font-size:14px;line-height:18px;color:#000;white-space:nowrap;left:657.08px;transform-origin:0 50%;transform:scaleX(0.900);-webkit-text-stroke:0.22px #000;">600</span>
<span style="position:absolute;top:489.00px;font-size:14px;line-height:18px;color:#000;white-space:nowrap;left:44.93px;transform-origin:0 50%;transform:scaleX(0.958);-webkit-text-stroke:0.22px #000;">2/19/2024</span>
<span style="position:absolute;top:489.00px;font-size:14px;line-height:18px;color:#000;white-space:nowrap;left:108.90px;transform-origin:0 50%;transform:scaleX(0.900);-webkit-text-stroke:0.22px #000;">P015</span>
<span style="position:absolute;top:489.00px;font-size:14px;line-height:18px;color:#000;white-space:nowrap;left:185.10px;transform-origin:0 50%;transform:scaleX(0.972);-webkit-text-stroke:0.22px #000;">Michael Garcia</span>
<span style="position:absolute;top:489.00px;font-size:14px;line-height:18px;color:#000;white-space:nowrap;left:330.10px;transform-origin:0 50%;transform:scaleX(0.969);-webkit-text-stroke:0.22px #000;">Headphones</span>
<span style="position:absolute;top:489.00px;font-size:14px;line-height:18px;color:#000;white-space:nowrap;left:447.70px;transform-origin:0 50%;-webkit-text-stroke:0.22px #000;">Electronics</span>
<span style="position:absolute;top:489.00px;font-size:14px;line-height:18px;color:#000;white-space:nowrap;left:583.09px;transform-origin:0 50%;transform:scaleX(0.900);-webkit-text-stroke:0.22px #000;">1</span>
<span style="position:absolute;top:489.00px;font-size:14px;line-height:18px;color:#000;white-space:nowrap;left:664.09px;transform-origin:0 50%;transform:scaleX(0.900);-webkit-text-stroke:0.22px #000;">50</span>
<span style="position:absolute;top:509.00px;font-size:14px;line-height:18px;color:#000;white-space:nowrap;left:44.93px;transform-origin:0 50%;transform:scaleX(0.958);-webkit-text-stroke:0.22px #000;">2/20/2024</span>
<span style="position:absolute;top:509.00px;font-size:14px;line-height:18px;color:#000;white-space:nowrap;left:108.90px;transform-origin:0 50%;transform:scaleX(0.900);-webkit-text-stroke:0.22px #000;">P016</span>
<span style="position:absolute;top:509.00px;font-size:14px;line-height:18px;color:#000;white-space:nowrap;left:185.10px;transform-origin:0 50%;transform:scaleX(0.972);-webkit-text-stroke:0.22px #000;">Michael Smith</span>
<span style="position:absolute;top:509.00px;font-size:14px;line-height:18px;color:#000;white-space:nowrap;left:330.10px;transform-origin:0 50%;transform:scaleX(0.987);-webkit-text-stroke:0.22px #000;">Air Conditioner</span>
<span style="position:absolute;top:509.00px;font-size:14px;line-height:18px;color:#000;white-space:nowrap;left:447.70px;transform-origin:0 50%;-webkit-text-stroke:0.22px #000;">Appliances</span>
<span style="position:absolute;top:509.00px;font-size:14px;line-height:18px;color:#000;white-space:nowrap;left:583.09px;transform-origin:0 50%;transform:scaleX(0.900);-webkit-text-stroke:0.22px #000;">4</span>
<span style="position:absolute;top:509.00px;font-size:14px;line-height:18px;color:#000;white-space:nowrap;left:650.07px;transform-origin:0 50%;transform:scaleX(0.900);-webkit-text-stroke:0.22px #000;">2800</span>
<span style="position:absolute;top:529.00px;font-size:14px;line-height:18px;color:#000;white-space:nowrap;left:44.93px;transform-origin:0 50%;transform:scaleX(0.958);-webkit-text-stroke:0.22px #000;">2/21/2024</span>
<span style="position:absolute;top:529.00px;font-size:14px;line-height:18px;color:#000;white-space:nowrap;left:108.90px;transform-origin:0 50%;transform:scaleX(0.900);-webkit-text-stroke:0.22px #000;">P017</span>
<span style="position:absolute;top:529.00px;font-size:14px;line-height:18px;color:#000;white-space:nowrap;left:185.10px;transform-origin:0 50%;transform:scaleX(0.972);-webkit-text-stroke:0.22px #000;">Sarah Garcia</span>
<span style="position:absolute;top:529.00px;font-size:14px;line-height:18px;color:#000;white-space:nowrap;left:330.50px;transform-origin:0 50%;transform:scaleX(0.987);-webkit-text-stroke:0.22px #000;">Television</span>
<span style="position:absolute;top:529.00px;font-size:14px;line-height:18px;color:#000;white-space:nowrap;left:447.70px;transform-origin:0 50%;-webkit-text-stroke:0.22px #000;">Electronics</span>
<span style="position:absolute;top:529.00px;font-size:14px;line-height:18px;color:#000;white-space:nowrap;left:583.09px;transform-origin:0 50%;transform:scaleX(0.900);-webkit-text-stroke:0.22px #000;">1</span>
<span style="position:absolute;top:529.00px;font-size:14px;line-height:18px;color:#000;white-space:nowrap;left:657.08px;transform-origin:0 50%;transform:scaleX(0.900);-webkit-text-stroke:0.22px #000;">450</span>
<span style="position:absolute;top:549.00px;font-size:14px;line-height:18px;color:#000;white-space:nowrap;left:44.93px;transform-origin:0 50%;transform:scaleX(0.958);-webkit-text-stroke:0.22px #000;">2/22/2024</span>
<span style="position:absolute;top:549.00px;font-size:14px;line-height:18px;color:#000;white-space:nowrap;left:108.90px;transform-origin:0 50%;transform:scaleX(0.900);-webkit-text-stroke:0.22px #000;">P018</span>
<span style="position:absolute;top:549.00px;font-size:14px;line-height:18px;color:#000;white-space:nowrap;left:185.10px;transform-origin:0 50%;transform:scaleX(0.972);-webkit-text-stroke:0.22px #000;">Sarah Smith</span>
<span style="position:absolute;top:549.00px;font-size:14px;line-height:18px;color:#000;white-space:nowrap;left:330.50px;transform-origin:0 50%;transform:scaleX(0.969);-webkit-text-stroke:0.22px #000;">Microwave</span>
<span style="position:absolute;top:549.00px;font-size:14px;line-height:18px;color:#000;white-space:nowrap;left:447.70px;transform-origin:0 50%;-webkit-text-stroke:0.22px #000;">Appliances</span>
<span style="position:absolute;top:549.00px;font-size:14px;line-height:18px;color:#000;white-space:nowrap;left:583.09px;transform-origin:0 50%;transform:scaleX(0.900);-webkit-text-stroke:0.22px #000;">2</span>
<span style="position:absolute;top:549.00px;font-size:14px;line-height:18px;color:#000;white-space:nowrap;left:657.08px;transform-origin:0 50%;transform:scaleX(0.900);-webkit-text-stroke:0.22px #000;">300</span>
<svg style="position:absolute;left:0;top:0" width="711" height="588" viewBox="0 0 711 588"><rect x="25.5" y="187.5" width="656" height="380" fill="none" stroke="#1f7246" stroke-width="3"/><path d="M27 188.6 H520" stroke="#fff" stroke-width="1.3" stroke-dasharray="2.2 3.9" fill="none"/><path d="M524 188.6 H680" stroke="#fff" stroke-width="1.3" stroke-dasharray="2.2 6.4" fill="none"/><path d="M26.5 193 V566" stroke="#fff" stroke-width="1.4" stroke-dasharray="2 7" fill="none"/><path d="M680.6 190 V566" stroke="#fff" stroke-width="1.6" stroke-dasharray="2 7" fill="none"/><path d="M28 566.7 H590" stroke="#fff" stroke-width="1.5" stroke-dasharray="2 4.1" fill="none"/><path d="M594 566.7 H680" stroke="#fff" stroke-width="1.5" stroke-dasharray="2 7.2" fill="none"/><rect x="679" y="565" width="5" height="5" fill="#1f7246"/></svg>
<div style="position:absolute;left:284px;top:541px;width:143px;height:32px;background:rgba(255,255,255,.3)"></div>
<svg style="position:absolute;left:284px;top:541px" width="28" height="31" viewBox="0 0 28 31"><path d="M13.5 0 L0.3 7.5 V22.5 L13.5 30 Z" fill="rgba(150,172,230,.62)"/><path d="M13.5 0 L26.8 7.5 V22.5 L13.5 30 Z" fill="rgba(165,165,170,.6)"/><path d="M13.5 9.5 L19.3 12.8 V19.2 L13.5 22.5 L7.7 19.2 V12.8 Z" fill="rgba(225,228,235,.7)"/><path d="M13.5 9.5 V16 L7.7 19.2 V12.8 Z" fill="rgba(170,170,175,.7)"/><path d="M13.5 16 L19.3 19.2 L13.5 22.5 L7.7 19.2 Z" fill="rgba(150,172,230,.75)"/></svg>
<span style="position:absolute;left:316.3px;top:539px;font-size:22px;line-height:28px;font-weight:bold;color:rgba(135,155,225,.55);white-space:nowrap;transform-origin:0 50%;transform:scaleX(.975)">exceldemy</span>
<span style="position:absolute;left:331px;top:562px;font-size:7px;line-height:9px;color:rgba(90,90,90,.35);white-space:nowrap;letter-spacing:1.1px">EXCEL · DATA · BI</span>

<!-- dialog -->
<div style="position:absolute;left:262px;top:237px;width:212px;height:126px;background:#f0f0f0;border-radius:8px;box-shadow:0 0 0 1px rgba(0,0,0,.16),0 22px 40px rgba(0,0,0,.4),0 2px 10px rgba(0,0,0,.12);overflow:hidden"><div style="position:absolute;left:0;top:0;width:212px;height:30px;background:#f1f3f9"></div></div>
<span style="position:absolute;top:244.00px;font-size:12px;line-height:16px;color:#1b1b1b;white-space:nowrap;left:271.20px;transform-origin:0 50%;transform:scaleX(0.951);">Create Table</span>
<span style="position:absolute;top:243.00px;font-size:14px;line-height:18px;color:#1b1b1b;white-space:nowrap;left:402.31px;transform-origin:50% 50%;transform:scaleX(0.880);-webkit-text-stroke:0.3px #1b1b1b;">?</span>
<svg style="position:absolute;left:444.8px;top:245px" width="12" height="12" viewBox="0 0 12 12"><path d="M1 1 L11 11 M11 1 L1 11" stroke="#1b1b1b" stroke-width="1.1" fill="none"/></svg>
<span style="position:absolute;top:273.00px;font-size:12px;line-height:16px;color:#000;white-space:nowrap;left:268.90px;transform-origin:0 50%;transform:scaleX(0.968);">Where is the data for your table?</span>
<div style="position:absolute;left:269.4px;top:286px;width:10.3px;height:1px;background:#000"></div>
<div style="position:absolute;left:268px;top:290px;width:200px;height:21px;background:#fff;border:1px solid #a9a9a9"></div>
<div style="position:absolute;left:272px;top:294.5px;width:60.3px;height:12px;background:#c4c4c4"></div>
<span style="position:absolute;top:293.00px;font-size:12px;line-height:16px;color:#000;white-space:nowrap;left:272.30px;transform-origin:0 50%;transform:scaleX(0.881);">$A$1:$G$19</span>
<div style="position:absolute;left:332px;top:293.5px;width:1px;height:14px;background:#000"></div>
<div style="position:absolute;left:446px;top:291px;width:21px;height:19px;background:#fdfdfd;border:1px solid #d0d0d0;border-radius:3px"></div>
<svg style="position:absolute;left:450px;top:293px" width="13" height="15" viewBox="0 0 13 15"><path d="M6.5 2.6 L6.5 10.2 M2.6 6.4 L6.5 2.5 L10.4 6.4" stroke="#000" stroke-width="1.8" fill="none"/><path d="M2.4 12.6 H10.6" stroke="#000" stroke-width="1.4" fill="none"/></svg>
<div style="position:absolute;left:268px;top:315px;width:13px;height:13px;background:#0f62b8;border-radius:3px"></div>
<svg style="position:absolute;left:268px;top:315px" width="13" height="13" viewBox="0 0 13 13"><path d="M3.6 6.9 L5.7 8.9 L9.5 4.6" stroke="#fff" stroke-width="1.05" fill="none" stroke-linecap="round" stroke-linejoin="round"/></svg>
<span style="position:absolute;top:314.00px;font-size:12px;line-height:16px;color:#000;white-space:nowrap;left:288.30px;transform-origin:0 50%;transform:scaleX(0.946);">My table has headers</span>
<div style="position:absolute;left:288.2px;top:327px;width:13.6px;height:1px;background:#000"></div>
<div style="position:absolute;left:309.5px;top:334px;width:73px;height:21.5px;background:#fdfdfd;border:1px solid #1a6fc4;border-radius:4px;box-shadow:inset 0 0 0 0.5px #1a6fc4"></div>
<span style="position:absolute;top:338.00px;font-size:12px;line-height:16px;color:#000;white-space:nowrap;left:338.13px;transform-origin:50% 50%;transform:scaleX(0.860);">OK</span>
<div style="position:absolute;left:394.5px;top:334px;width:72px;height:21px;background:#fdfdfd;border:1px solid #d0d0d0;border-radius:4px"></div>
<span style="position:absolute;top:338.00px;font-size:12px;line-height:16px;color:#000;white-space:nowrap;left:411.82px;transform-origin:50% 50%;transform:scaleX(0.920);">Cancel</span>
<div style="position:absolute;left:307px;top:330.5px;width:78px;height:28px;border:3px solid #ff0000;border-radius:2px"></div>
</div></body></html>
